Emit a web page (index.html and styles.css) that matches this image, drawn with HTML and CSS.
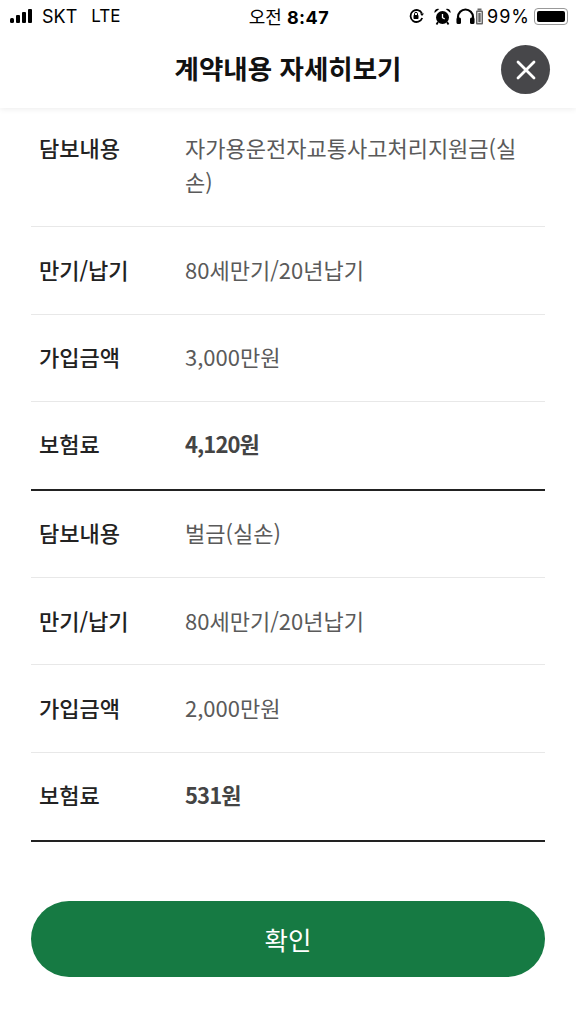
FILE: index.html
```html
<!DOCTYPE html>
<html lang="ko">
<head>
  <meta charset="UTF-8">
  <meta name="viewport" content="width=device-width, initial-scale=1.0">
  <title>계약내용 자세히보기</title>
  <link rel="stylesheet" href="styles.css">
</head>
<body>
  <header class="top">
    <div class="status">
      <div class="status-left">
        <svg class="signal" width="26" height="16" viewBox="0 0 26 16">
          <rect x="0" y="10" width="4" height="5" rx="1.5"/>
          <rect x="6" y="7" width="4" height="8" rx="1"/>
          <rect x="12" y="4" width="4" height="11" rx="1"/>
          <rect x="18" y="1" width="4" height="14" rx="1"/>
        </svg>
        <span>SKT</span>
        <span class="lte">LTE</span>
      </div>
      <div class="status-time">오전 <b>8:47</b></div>
      <div class="status-right">
        <svg width="17" height="16" viewBox="0 0 17 16">
          <path d="M14 5.5A6 6 0 1 0 14.2 10" fill="none" stroke="#000" stroke-width="1.8"/>
          <path d="M12 5.5h4l-2 2.5z"/>
          <rect x="5.5" y="7" width="5" height="4" rx=".7"/>
          <path d="M6.5 7V5.8a1.5 1.5 0 0 1 3 0V7" fill="none" stroke="#000" stroke-width="1"/>
        </svg>
        <svg class="alarm" width="17" height="17" viewBox="0 0 17 17">
          <circle cx="8.5" cy="9.5" r="6.500"/>
          <path d="M0.500 5a3.500 3.500 0 0 1 4.800-4zM16.500 5a3.500 3.500 0 0 0-4.800-4z"/>
          <path d="M8.500 6v3.700l2.200 1.200" fill="none" stroke="#fff" stroke-width="1.300"/>
          <path d="M4 14l-1.500 2.500M13 14l1.500 2.500" stroke="#000" stroke-width="1.800"/>
        </svg>
        <svg class="phones" width="19" height="17" viewBox="0 0 19 17">
          <path d="M2 14V9a7.500 7.500 0 0 1 15 0v5" fill="none" stroke="#000" stroke-width="2.200"/>
          <rect x="0.500" y="9.500" width="4.500" height="6.500" rx="1.500"/>
          <rect x="14" y="9.500" width="4.500" height="6.500" rx="1.500"/>
        </svg>
        <svg width="9" height="17" viewBox="0 0 9 17">
          <rect x="2.500" y="0.500" width="4" height="2" fill="#666"/>
          <rect x="1" y="2.500" width="7" height="14" rx="1" fill="#666"/>
          <rect x="2.500" y="4" width="4" height="11" fill="#fff"/>
          <rect x="3.300" y="4.800" width="2.400" height="9.500" fill="#666"/>
        </svg>
        <span class="pct">99%</span>
        <span class="battery"><span class="battery-fill"></span></span>
      </div>
    </div>
    <div class="title-bar">
      <h1>계약내용 자세히보기</h1>
      <button class="close" aria-label="닫기">
        <svg width="22" height="22" viewBox="0 0 22 22">
          <path d="M3 3l16 16M19 3L3 19" stroke="#fff" stroke-width="2.800" stroke-linecap="round"/>
        </svg>
      </button>
    </div>
  </header>

  <main class="content">
    <dl class="group">
      <div class="row">
        <dt>담보내용</dt>
        <dd>자가용운전자교통사고처리지원금(실손)</dd>
      </div>
      <div class="row">
        <dt>만기/납기</dt>
        <dd>80세만기/20년납기</dd>
      </div>
      <div class="row">
        <dt>가입금액</dt>
        <dd>3,000만원</dd>
      </div>
      <div class="row">
        <dt>보험료</dt>
        <dd class="price">4,120원</dd>
      </div>
    </dl>
    <dl class="group">
      <div class="row">
        <dt>담보내용</dt>
        <dd>벌금(실손)</dd>
      </div>
      <div class="row">
        <dt>만기/납기</dt>
        <dd>80세만기/20년납기</dd>
      </div>
      <div class="row">
        <dt>가입금액</dt>
        <dd>2,000만원</dd>
      </div>
      <div class="row">
        <dt>보험료</dt>
        <dd class="price">531원</dd>
      </div>
    </dl>
    <button class="confirm">확인</button>
  </main>
</body>
</html>
```

FILE: styles.css
```css
* {
  box-sizing: border-box;
}
body {
  margin: 0;
  background-color: #fff;
  color: #222;
  font-family: "Noto Sans CJK KR", "Noto Sans", sans-serif;
}
.top {
  height: 108px;
  box-shadow: 0 1px 6px rgba(0, 0, 0, 0.08);
}
.status {
  height: 32px;
  padding: 0 8px 0 10px;
  display: grid;
  grid-template-columns: 1fr auto 1fr;
  align-items: center;
  color: #000;
  font-size: 18px;
  font-family: Inter, "Noto Sans CJK KR", sans-serif;
}
.status-left {
  display: flex;
  align-items: center;
  gap: 6px;
}
.lte {
  margin-left: 8px;
  font-size: 17px;
}
.status-time {
  font-family: "Noto Sans CJK KR", sans-serif;
  font-size: 18px;
}
.status-time b {
  font-family: Inter, sans-serif;
  letter-spacing: 0.5px;
}
.status-right {
  display: flex;
  align-items: center;
  justify-content: flex-end;
}
.alarm {
  margin-left: 9px;
}
.phones {
  margin-left: 4.500px;
}
.pct {
  margin-left: 3.500px;
  letter-spacing: 1px;
}
.battery {
  width: 34px;
  height: 17px;
  margin-left: 4px;
  padding: 2px;
  border: 1px solid #999;
  border-radius: 4px;
  display: block;
}
.battery-fill {
  display: block;
  height: 100%;
  background-color: #000;
  border-radius: 2px;
}
.title-bar {
  height: 76px;
  padding: 0 26px 0 0;
  display: flex;
  align-items: center;
  position: relative;
  justify-content: center;
}
.title-bar h1 {
  margin: 0 0 6px;
  font-size: 26.500px;
  font-weight: 700;
  color: #111;
  position: relative;
  left: 13px;
}
.close {
  position: absolute;
  right: 26px;
  top: 13px;
  width: 49px;
  height: 49px;
  padding: 0;
  border: none;
  border-radius: 50%;
  background-color: #47474a;
  display: flex;
  align-items: center;
  justify-content: center;
}
.content {
  padding: 22px 31px 0;
}
.group {
  margin: 0;
  border-bottom: 2px solid #222;
}
.row {
  display: flex;
  padding: 24.500px 0 27.800px;
  border-bottom: 1px solid #e8e8e8;
  font-size: 22px;
  line-height: 34px;
}
.group:first-child .row:first-child {
  padding-top: 0;
  padding-bottom: 28.300px;
}
.row:last-child {
  padding-bottom: 28.500px;
  border-bottom: none;
}
.row dt {
  width: 154px;
  flex-shrink: 0;
  padding-left: 8px;
  font-weight: 500;
  color: #222;
}
.row dd {
  margin: 0;
  flex: 1;
  color: #5a5a5a;
  font-weight: 400;
  padding-right: 20px;
}
.row dd.price {
  font-weight: 700;
  color: #444;
  letter-spacing: -0.900px;
}
.confirm {
  display: block;
  width: 100%;
  height: 76px;
  margin-top: 59px;
  border: none;
  border-radius: 38px;
  background-color: #167a43;
  color: #fff;
  font-family: inherit;
  font-size: 25.500px;
  font-weight: 400;
}
```
